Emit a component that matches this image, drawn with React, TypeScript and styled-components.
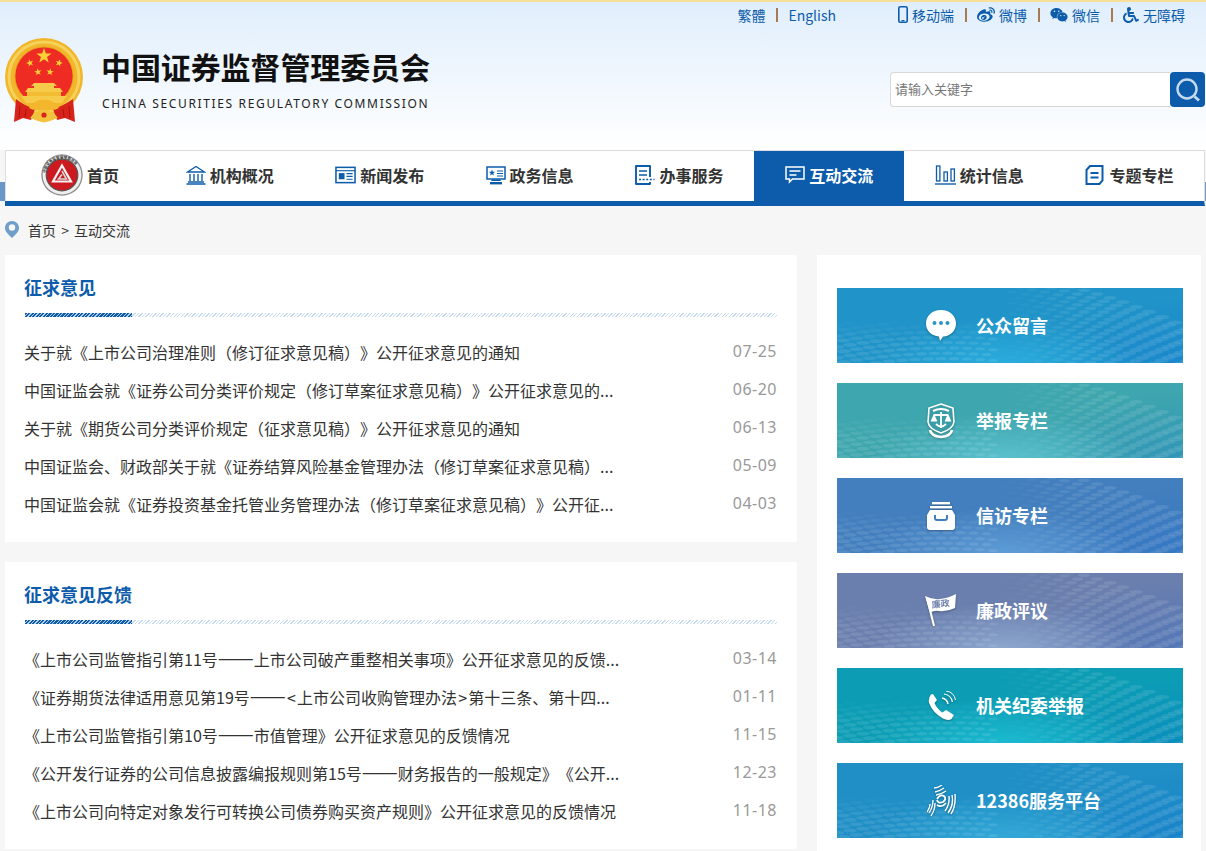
import React from 'react'
import styled, {createGlobalStyle} from 'styled-components'
import {FaWeibo, FaWeixin, FaWheelchair} from 'react-icons/fa'

const blue = '#0d5cab'

const GlobalStyle = createGlobalStyle`
  html, body {
    margin: 0;
    padding: 0;
    background: #f6f6f6;
    overflow: hidden;
  }
  body {
    font-family: "Noto Sans CJK SC", "Liberation Sans", sans-serif;
    text-spacing-trim: space-all;
  }
  * { box-sizing: border-box; }
`

const opinions = [
  ['关于就《上市公司治理准则（修订征求意见稿）》公开征求意见的通知', '07-25'],
  ['中国证监会就《证券公司分类评价规定（修订草案征求意见稿）》公开征求意见的...', '06-20'],
  ['关于就《期货公司分类评价规定（征求意见稿）》公开征求意见的通知', '06-13'],
  ['中国证监会、财政部关于就《证券结算风险基金管理办法（修订草案征求意见稿）...', '05-09'],
  ['中国证监会就《证券投资基金托管业务管理办法（修订草案征求意见稿）》公开征...', '04-03'],
]

const feedback = [
  ['《上市公司监管指引第11号——上市公司破产重整相关事项》公开征求意见的反馈...', '03-14'],
  ['《证券期货法律适用意见第19号——<上市公司收购管理办法>第十三条、第十四...', '01-11'],
  ['《上市公司监管指引第10号——市值管理》公开征求意见的反馈情况', '11-15'],
  ['《公开发行证券的公司信息披露编报规则第15号——财务报告的一般规定》《公开...', '12-23'],
  ['《上市公司向特定对象发行可转换公司债券购买资产规则》公开征求意见的反馈情况', '11-18'],
]

const starPoints = (cx: number, cy: number, r: number, rot = 0) => {
  const pts: string[] = []
  for (let i = 0; i < 10; i++) {
    const rad = i % 2 === 0 ? r : r * 0.4
    const a = -Math.PI / 2 + rot + (i * Math.PI) / 5
    pts.push((cx + rad * Math.cos(a)).toFixed(2) + ',' + (cy + rad * Math.sin(a)).toFixed(2))
  }
  return pts.join(' ')
}

const Emblem = () => (
  <svg width="80" height="85" viewBox="0 0 80 85">
    <circle cx="39" cy="39" r="39" fill="#f1b62c" />
    <circle cx="39" cy="39" r="35" fill="none" stroke="#f7d25a" strokeWidth="3" />
    <circle cx="39" cy="38" r="29.5" fill="#e5a11d" />
    <circle cx="39" cy="38" r="28.6" fill="#ee2c24" />
    <polygon points={starPoints(39, 18, 8)} fill="#f9d136" />
    <polygon points={starPoints(25, 25, 3.8, -0.3)} fill="#f9d136" />
    <polygon points={starPoints(54, 25, 3.8, 0.3)} fill="#f9d136" />
    <polygon points={starPoints(33, 34, 3.8, -0.15)} fill="#f9d136" />
    <polygon points={starPoints(45, 34, 3.8, 0.15)} fill="#f9d136" />
    <path d="M29 45 H49 L52 48 H49 V50 H55 L58 54 H20 L23 50 H29 V48 H26 Z" fill="#f6cb4a" />
    <rect x="22" y="54" width="34" height="4" fill="#f3bd33" />
    <path d="M16 58 H62 L57 65 H21 Z" fill="#f6cb4a" />
    <path d="M11 61 Q20 68 30 71 L26 82 L18 80 L9 84 Z" fill="#d8231b" />
    <path d="M68 61 Q58 68 48 71 L52 82 L60 80 L70 84 Z" fill="#d8231b" />
    <path d="M15 68 L14 80 M21 71 L20 79 M64 68 L65 80 M58 71 L59 79" stroke="#a9140f" strokeWidth="1" />
    <path d="M24 70 Q32 60 39 62 Q46 60 54 70 Q48 74 39 70 Q30 74 24 70 Z" fill="#f3b62c" />
    <path d="M25 80 Q32 71 39 72 Q46 71 53 80 Q46 83 39 84.5 Q32 83 25 80 Z" fill="#f3c23c" />
    <circle cx="39" cy="77" r="2.6" fill="#d8231b" />
  </svg>
)

const Seal = () => (
  <svg width="42" height="42" viewBox="0 0 42 42">
    <defs>
      <path id="seal-top" d="M4.4 21 A16.6 16.6 0 0 1 37.6 21" />
    </defs>
    <circle cx="21" cy="21" r="20.7" fill="#8c8c8c" />
    <circle cx="21" cy="21" r="19.4" fill="#efefef" />
    <circle cx="21" cy="21" r="15.8" fill="#cb1a20" stroke="#555" strokeWidth="1.2" />
    <text fontSize="3.6" fontWeight="700" fill="#333">
      <textPath href="#seal-top" startOffset="4%">中国证券监督管理委员会</textPath>
    </text>
    <path d="M21 11.5 L30 27.5 H12 Z" fill="none" stroke="#f3f3f3" strokeWidth="2.2" />
    <path d="M21 17 L25.4 25 H17.5 L21 20.5" fill="none" stroke="#d8d8d8" strokeWidth="1.6" />
  </svg>
)

const BankIcon = () => (
  <svg width="20" height="20" viewBox="0 0 20 20" fill="none" stroke={blue} strokeWidth="1.4">
    <path d="M1.5 7 L10 1.5 L18.5 7 Z" />
    <path d="M4 9 V16 M8 9 V16 M12 9 V16 M16 9 V16" />
    <path d="M2 17 H18 M0.5 19 H19.5" />
  </svg>
)

const NewsIcon = () => (
  <svg width="21" height="18" viewBox="0 0 22 18" fill="none" stroke={blue}>
    <rect x="1" y="1" width="20" height="16" strokeWidth="1.6" />
    <path d="M1 4.5 H21" strokeWidth="1.2" />
    <rect x="4" y="7" width="6" height="6.5" fill={blue} stroke="none" />
    <path d="M12 7.5 H18.5 M12 10.5 H18.5 M12 13.5 H18.5" strokeWidth="1.2" />
  </svg>
)

const ScreenIcon = () => (
  <svg width="20" height="19" viewBox="0 0 20 19" fill="none">
    <rect x="1" y="1" width="18" height="12" stroke={blue} strokeWidth="1.5" />
    <polygon points={starPoints(6, 6.8, 3.4)} fill={blue} />
    <path d="M11 5 H17 M11 7.5 H17 M11 10 H17" stroke={blue} strokeWidth="1.1" />
    <path d="M6 13.5 H14 L15 15 H5 Z" fill={blue} />
    <rect x="4" y="16" width="12" height="2.4" fill={blue} />
  </svg>
)

const ServiceIcon = () => (
  <svg width="20" height="20" viewBox="0 0 20 20" fill="none" stroke={blue}>
    <path d="M15 12 V1 H1 V19 H15 V17" strokeWidth="1.9" strokeLinejoin="round" />
    <path d="M4 6 H12 M4 10 H12" strokeWidth="1.6" />
    <path d="M4 14.5 H19.5" strokeWidth="1.6" strokeDasharray="2 1.6" />
  </svg>
)

const ChatIcon = () => (
  <svg width="20" height="20" viewBox="0 0 20 20" fill="none" stroke="#fff" strokeWidth="1.5">
    <path d="M1 2 H19 V14 H7.5 L4.5 17 V14 H1 Z" />
    <path d="M4.5 6 H15.5 M4.5 10 H11.5" />
  </svg>
)

const StatsIcon = () => (
  <svg width="21" height="20" viewBox="0 0 21 20" fill="none" stroke={blue} strokeWidth="1.3">
    <rect x="1.5" y="1" width="3.4" height="15" />
    <rect x="9" y="7" width="3.4" height="9" />
    <rect x="16" y="4" width="3.4" height="12" />
    <path d="M0 19 H21" strokeWidth="1.4" />
  </svg>
)

const NoteIcon = () => (
  <svg width="21" height="20" viewBox="0 0 21 20" fill="none" stroke={blue}>
    <path d="M5 1 H17.5 V15.5 L14.5 19 H1.5 V5 Z" strokeWidth="2" />
    <path d="M5.5 8 H13.5 M5.5 12.5 H13.5" strokeWidth="1.8" />
  </svg>
)

const PhoneIcon = () => (
  <svg width="10" height="17" viewBox="0 0 10 17">
    <rect x="0.8" y="0.8" width="8.4" height="15.4" rx="1.5" fill="none" stroke={blue} strokeWidth="1.6" />
    <rect x="3.5" y="14" width="3" height="1.2" fill={blue} />
  </svg>
)

const SearchIcon = () => (
  <svg width="26" height="26" viewBox="0 0 26 26" fill="none">
    <circle cx="12" cy="12" r="9.5" stroke="#c6daee" strokeWidth="2.4" />
    <path d="M19.5 19.5 L24 23.5" stroke="#c6daee" strokeWidth="2.8" />
  </svg>
)

const BubbleBig = () => (
  <svg width="32" height="33" viewBox="0 0 32 33">
    <path d="M16 1 C25 1 31 7 31 14.5 C31 22 25 27.5 18 27.5 L15 32 L14 27.5 C7 27 1 22 1 14.5 C1 7 7 1 16 1 Z" fill="#fff" />
    <circle cx="9.5" cy="14" r="2" fill="#2a93c9" />
    <circle cx="16" cy="14" r="2" fill="#2a93c9" />
    <circle cx="22.5" cy="14" r="2" fill="#2a93c9" />
  </svg>
)

const Badge = () => (
  <svg width="28" height="36" viewBox="0 0 28 36" fill="none" stroke="#fff">
    <path d="M14 1 L26 5 L27 19 Q26 26 14 30 Q2 26 1 19 L2 5 Z" strokeWidth="1.6" fill="#3a9ca5" />
    <path d="M6 8 Q14 4 22 8" strokeWidth="2" />
    <path d="M14 9 V25 M7 12 H21" strokeWidth="1.8" />
    <path d="M7 12 L4.5 18 H9.5 Z M21 12 L18.5 18 H23.5 Z" strokeWidth="1.2" fill="#fff" />
    <path d="M9 21 Q14 26 19 21" strokeWidth="1.8" />
    <path d="M3 27 Q4 33 14 34 Q24 33 25 27" strokeWidth="2.6" />
  </svg>
)

const FileBox = () => (
  <svg width="28" height="28" viewBox="0 0 28 28">
    <rect x="5" y="0" width="18" height="2.4" fill="#fff" />
    <rect x="3" y="4" width="22" height="2.4" fill="#fff" />
    <path d="M3 8 H25 L28 13 V25 Q28 28 25 28 H3 Q0 28 0 25 V13 Z" fill="#fff" />
    <path d="M8 13 V16 Q8 18 10 18 H18 Q20 18 20 16 V13" fill="none" stroke="#3f7fc0" strokeWidth="2" />
  </svg>
)

const Flag = () => (
  <svg width="32" height="33" viewBox="0 0 32 33">
    <path d="M0 2 Q8 6 15 5 Q24 4 31 0 L30 14 Q22 18 14 17 Q9 16 5 19 Z" fill="#fff" />
    <path d="M2 4 L9 32" stroke="#fff" strokeWidth="2" />
    <text x="7" y="14" fontSize="9" fontWeight="700" fill="#6f80ac" transform="rotate(-6 7 14)">廉政</text>
  </svg>
)

const PhoneCall = () => (
  <svg width="29" height="30" viewBox="0 0 29 30" fill="none">
    <path d="M6 3 L10 9 L7.5 12 Q10 18 15.5 21.5 L19 19 L27 24 L24.5 28 Q21 30 16 27.5 Q6 22 2 12 Q1 7 4 3.5 Z" fill="#fff" />
    <path d="M15 7 Q20 8 21 13" stroke="#fff" strokeWidth="1.5" />
    <path d="M17 3 Q24 4 25.5 11" stroke="#fff" strokeWidth="1.2" />
    <path d="M19 0 Q27 1 28.5 9" stroke="#fff" strokeWidth="1" />
  </svg>
)

const SignalIcon = () => (
  <svg width="29" height="32" viewBox="0 0 29 32" fill="none" stroke="#fff">
    <path d="M10 14 Q13 9 17 11 Q20 14 16 17 Q11 19 10 15 M10 20 Q15 23 19 18" strokeWidth="1.8" />
    <path d="M8 7 Q13 6 17 3 M9 10 Q15 9 19 6 M7 3 Q11 3 15 0" strokeWidth="1.3" />
    <path d="M22 11 Q23 19 18 26 M25 10 Q27 20 21 28 M28 9 Q29 21 24 29" strokeWidth="1.4" />
    <path d="M6 15 Q6 22 2 28 M8 18 Q8 25 4 31 M3 19 Q3 23 0 27" strokeWidth="1.3" />
  </svg>
)

// scaly wave texture that sits behind each banner
const WaveTexture = () => {
  const cells: React.ReactElement[] = []
  for (let r = 0; r < 16; r++) {
    for (let c = 0; c < 30; c++) {
      const x = c * 13 + (r % 2) * 6.5
      const right = x > 160
      const t = Math.abs(x - 160) / 190
      const y = right ? r * 5.4 - 14 + 34 * t * t + 20 * t : r * 5.4 + 8 - 16 * t + 30 * t * t
      // pattern fades out towards the top left and the top middle
      const fade = right ? Math.min(1, t * 2.2) : Math.max(0, Math.min(1, (y - 32) / 22))
      if (fade <= 0 || y < -3 || y > 78) continue
      const w = 4.6 + t * 3
      cells.push(<ellipse key={r + '-' + c} cx={x} cy={y} rx={w} ry={1.5 + t * 0.6} fill="#fff" opacity={0.1 * fade} />)
    }
  }
  return (
    <TextureSvg viewBox="0 0 346 75" preserveAspectRatio="none">
      {cells}
    </TextureSvg>
  )
}

const banners = [
  {label: '公众留言', top: '#2094c8', low: '#2aaede', icon: <BubbleBig />},
  {label: '举报专栏', top: '#3ea6ae', low: '#5cc2cf', icon: <Badge />},
  {label: '信访专栏', top: '#437fbe', low: '#5f9ed8', icon: <FileBox />},
  {label: '廉政评议', top: '#6a7fae', low: '#8ea9d0', icon: <Flag />},
  {label: '机关纪委举报', top: '#0c9db5', low: '#1cbcd2', icon: <PhoneCall />},
  {label: '12386服务平台', top: '#1f8fc6', low: '#35abd9', icon: <SignalIcon />},
]

// dashes and angle brackets run wider in the reference font
const titleParts = (text: string) =>
  text.split(/(——|<|>)/).map((part, i) => {
    if (part === '——') return <Dash key={i}>{part}</Dash>
    if (part === '<' || part === '>') return <Angle key={i}>{part}</Angle>
    return part
  })

const ListCard = ({title, rows}: {title: string; rows: string[][]}) => (
  <Card>
    <CardTitle>{title}</CardTitle>
    <Rule />
    <List>
      {rows.map((row) => (
        <Row key={row[0]}>
          <RowText>{titleParts(row[0])}</RowText>
          <RowDate>{row[1]}</RowDate>
        </Row>
      ))}
    </List>
  </Card>
)

const App = () => {
  return (
    <Page>
      <GlobalStyle />
      <Header>
        <TopBar>
          <TopGroup>
            <TopLink>繁體</TopLink>
            <Sep />
            <TopLink>English</TopLink>
          </TopGroup>
          <TopGroup>
            <TopLink><PhoneIcon />移动端</TopLink>
            <Sep />
            <TopLink><FaWeibo size={18} />微博</TopLink>
            <Sep />
            <TopLink><FaWeixin size={18} />微信</TopLink>
            <Sep />
            <TopLink><FaWheelchair size={16} />无障碍</TopLink>
          </TopGroup>
        </TopBar>
        <BrandRow>
          <Brand>
            <Emblem />
            <BrandText>
              <BrandName>中国证券监督管理委员会</BrandName>
              <BrandEn>CHINA SECURITIES REGULATORY COMMISSION</BrandEn>
            </BrandText>
          </Brand>
          <Search>
            <SearchInput placeholder="请输入关键字" />
            <SearchButton><SearchIcon /></SearchButton>
          </Search>
        </BrandRow>
      </Header>

      <NavBand>
        <Nav>
          <NavItem><Seal />首页</NavItem>
          <NavItem><BankIcon />机构概况</NavItem>
          <NavItem><NewsIcon />新闻发布</NavItem>
          <NavItem><ScreenIcon />政务信息</NavItem>
          <NavItem><ServiceIcon />办事服务</NavItem>
          <NavItem $active><ChatIcon />互动交流</NavItem>
          <NavItem><StatsIcon />统计信息</NavItem>
          <NavItem><NoteIcon />专题专栏</NavItem>
        </Nav>
      </NavBand>

      <Crumbs>
        <svg width="14" height="17" viewBox="0 0 14 17">
          <path d="M7 0 C11 0 14 3 14 7 C14 11 9.5 14.5 7 17 C4.5 14.5 0 11 0 7 C0 3 3 0 7 0 Z" fill="#6f9fc9" />
          <circle cx="7" cy="6.5" r="3.2" fill="#f6f6f6" />
        </svg>
        <CrumbText>首页 &gt; 互动交流</CrumbText>
      </Crumbs>

      <Main>
        <LeftCol>
          <ListCard title="征求意见" rows={opinions} />
          <ListCard title="征求意见反馈" rows={feedback} />
        </LeftCol>
        <Side>
          {banners.map((b) => (
            <Banner key={b.label} $top={b.top} $low={b.low}>
              <WaveTexture />
              <BannerIcon>{b.icon}</BannerIcon>
              <BannerLabel>{b.label}</BannerLabel>
            </Banner>
          ))}
        </Side>
      </Main>
    </Page>
  )
}

export default App

const Page = styled.div`
  width: 1206px;
  height: 851px;
  overflow: hidden;
  background: #f6f6f6;
`

const Header = styled.header`
  height: 150px;
  border-top: 2px solid #f8df9a;
  background: linear-gradient(#e0eefc, #ffffff);
`

const TopBar = styled.div`
  display: flex;
  justify-content: flex-end;
  gap: 62px;
  padding: 3px 21px 0 0;
  height: 36px;
`

const TopGroup = styled.div`
  display: flex;
  align-items: center;
  gap: 11px;
  height: 19px;
`

const TopLink = styled.a`
  display: flex;
  align-items: center;
  gap: 4px;
  font-size: 14px;
  color: ${blue};
  white-space: nowrap;
`

const Sep = styled.span`
  width: 2px;
  height: 14px;
  margin: 0 -0.5px;
  background: #a87a50;
`

const BrandRow = styled.div`
  display: flex;
  justify-content: space-between;
  align-items: flex-start;
  padding: 0 1px 0 5px;
`

const Brand = styled.div`
  display: flex;
  gap: 16px;
`

const BrandText = styled.div`
  padding-top: 8px;
`

const BrandName = styled.div`
  font-size: 30px;
  font-weight: 700;
  line-height: 40px;
  letter-spacing: -0.1px;
  color: #111;
  white-space: nowrap;
`

const BrandEn = styled.div`
  margin: 10px 0 0 1px;
  font-family: "Noto Sans", "Liberation Sans", sans-serif;
  font-size: 12px;
  line-height: 16px;
  letter-spacing: 1.64px;
  color: #222;
  white-space: nowrap;
`

const Search = styled.div`
  display: flex;
  margin-top: 34px;
  width: 315px;
  height: 35px;
`

const SearchInput = styled.input`
  flex: 1;
  min-width: 0;
  height: 35px;
  padding: 0 4px 2px;
  border: 1px solid #d8d8d8;
  border-right: none;
  border-radius: 4px 0 0 4px;
  background: #fff;
  font-family: inherit;
  font-size: 13px;
  outline: none;

  &::placeholder {
    color: #777;
    opacity: 1;
  }
`

const SearchButton = styled.div`
  display: flex;
  align-items: center;
  justify-content: center;
  width: 35px;
  height: 35px;
  border-radius: 4px;
  background: ${blue};
`

const NavBand = styled.div`
  height: 56px;
  padding: 0 1px 0 5px;
  background: linear-gradient(transparent 32px, #6a97c8 32px, #6a97c8 51px, transparent 51px);
`

const Nav = styled.nav`
  display: grid;
  grid-template-columns: repeat(8, 1fr);
  height: 56px;
  border-top: 1px solid #ddd;
  border-right: 1px solid #ddd;
  border-bottom: 5px solid ${blue};
  background: #fff;
  box-shadow: inset 1px 0 #ddd;
`

const NavItem = styled.a<{$active?: boolean}>`
  display: flex;
  align-items: center;
  justify-content: center;
  gap: 4px;
  padding-bottom: 2px;
  font-size: 16px;
  font-weight: 700;
  color: ${(p) => (p.$active ? '#fff' : '#333')};
  background: ${(p) => (p.$active ? blue : 'transparent')};
`

const Crumbs = styled.div`
  display: flex;
  align-items: center;
  gap: 9px;
  height: 49px;
  padding: 0 0 2px 5px;
`

const CrumbText = styled.span`
  font-size: 14px;
  word-spacing: 2px;
  color: #333;
`

const Main = styled.div`
  display: flex;
  align-items: flex-start;
  gap: 20px;
  padding-left: 5px;
`

const LeftCol = styled.div`
  display: flex;
  flex-direction: column;
  gap: 20px;
  width: 792px;
`

const Card = styled.section`
  height: 287px;
  padding: 19px 20px 0;
  background: #fff;
`

const CardTitle = styled.h2`
  margin: 0 0 0 -1px;
  font-size: 18px;
  font-weight: 700;
  line-height: 26px;
  color: ${blue};
`

const Rule = styled.div`
  position: relative;
  height: 4px;
  margin-top: 13px;
  background: repeating-linear-gradient(135deg, #c6dbef 0 1px, #fff 1px 2.5px);

  &::before {
    content: "";
    position: absolute;
    left: 0;
    top: 0;
    bottom: 0;
    width: 107px;
    background: repeating-linear-gradient(135deg, ${blue} 0 1.6px, #b9d2ea 1.6px 2.5px);
  }
`

const List = styled.ul`
  margin: 16px 0 0;
  padding: 0;
  list-style: none;
`

const Row = styled.li`
  display: flex;
  justify-content: space-between;
  align-items: center;
  height: 38px;
`

const RowText = styled.span`
  margin-left: -1px;
  font-size: 16px;
  line-height: 24px;
  color: #333;
  white-space: nowrap;
`

const Dash = styled.span`
  font-size: 21.5px;
  line-height: 0;
`

const Angle = styled.span`
  padding: 0 1.2px;
`

const RowDate = styled.span`
  margin-top: -3px;
  font-family: "Noto Sans", "Liberation Sans", sans-serif;
  font-size: 16px;
  letter-spacing: 0.5px;
  color: #999;
`

const Side = styled.aside`
  display: flex;
  flex-direction: column;
  gap: 20px;
  width: 384px;
  padding: 33px 18px 13px 20px;
  background: #fff;
`

const Banner = styled.a<{$top: string; $low: string}>`
  position: relative;
  display: flex;
  align-items: center;
  height: 75px;
  padding-left: 88px;
  overflow: hidden;
  background:
    radial-gradient(ellipse 38% 65% at 48% 105%, ${(p) => p.$low}, transparent),
    radial-gradient(ellipse 45% 90% at 100% 100%, rgba(0, 90, 215, 0.22), transparent),
    ${(p) => p.$top};
`

const TextureSvg = styled.svg`
  position: absolute;
  inset: 0;
  width: 100%;
  height: 100%;
`

const BannerIcon = styled.span`
  position: relative;
  display: flex;
  align-items: center;
  justify-content: center;
  width: 32px;
  margin-right: 19px;
  filter: drop-shadow(0 1px 1px rgba(0, 0, 0, 0.3));
`

const BannerLabel = styled.span`
  position: relative;
  padding-bottom: 2px;
  font-size: 18px;
  font-weight: 700;
  color: #fff;
  white-space: nowrap;
`
